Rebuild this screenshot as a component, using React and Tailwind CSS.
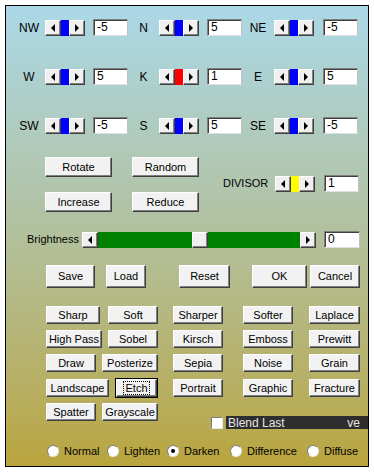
import React from 'react'

const font = { fontFamily: '"Liberation Sans", Arial, sans-serif' }

function Arrow({ dir }) {
    return dir === 'left'
        ? <span className='w-0 h-0 border-y-[4px] border-y-transparent border-r-[4px] border-r-black' />
        : <span className='w-0 h-0 border-y-[4px] border-y-transparent border-l-[4px] border-l-black' />
}

function ArrowBtn({ dir }) {
    return (
        <div className='w-[16px] h-[16px] flex items-center justify-center bg-[#f0f0f0] border-t border-l border-t-white border-l-white border-r border-b border-r-[#404040] border-b-[#404040] shadow-[inset_-1px_-1px_0_#808080]'>
            <Arrow dir={dir} />
        </div>
    )
}

function Spin({ thumb = 'bg-[#0000ff]' }) {
    return (
        <div className='flex w-[40px] h-[16px]'>
            <ArrowBtn dir='left' />
            <div className={`w-[8px] h-[16px] ${thumb}`} />
            <ArrowBtn dir='right' />
        </div>
    )
}

function Field({ value, className = 'w-[35px]' }) {
    return (
        <div className={`${className} h-[17px] bg-white border-t border-l border-t-[#808080] border-l-[#808080] border-r border-b border-r-[#c0c0c0] border-b-[#e0e0e0] shadow-[inset_1px_1px_0_#404040] pl-[3px] text-[12px] leading-[15px] text-black`}>
            {value}
        </div>
    )
}

function Btn({ children, className = '', focused }) {
    return (
        <div className={`${className} flex items-center justify-center bg-[#f2f2f2] text-[11px] text-black border-t border-l border-t-white border-l-white border-r border-b border-r-[#404040] border-b-[#404040] shadow-[inset_-1px_-1px_0_#808080] ${focused ? 'outline outline-1 outline-black' : ''}`}>
            {focused ? <span className='border border-dotted border-black px-[1px] leading-[12px]'>{children}</span> : children}
        </div>
    )
}

function DirRow({ cells, className }) {
    return (
        <div className={`flex items-center h-[17px] ${className}`}>
            <span className='ml-[7px] w-[32px] text-center text-[12px]'>{cells[0][0]}</span>
            <Spin thumb={cells[0][2]} />
            <div className='ml-[8px]'><Field value={cells[0][1]} /></div>
            <span className='w-[31px] text-center text-[12px]'>{cells[1][0]}</span>
            <Spin thumb={cells[1][2]} />
            <div className='ml-[8px]'><Field value={cells[1][1]} /></div>
            <span className='w-[32px] text-center text-[12px]'>{cells[2][0]}</span>
            <Spin thumb={cells[2][2]} />
            <div className='ml-[9px]'><Field value={cells[2][1]} /></div>
        </div>
    )
}

function Radio({ label, checked, className }) {
    return (
        <div className={`flex items-center gap-[5px] ${className}`}>
            <span className='w-[12px] h-[12px] rounded-full bg-white border border-t-[#808080] border-l-[#808080] border-r-[#e8e8e8] border-b-[#e8e8e8] flex items-center justify-center'>
                {checked && <span className='w-[4px] h-[4px] rounded-full bg-black' />}
            </span>
            <span className='text-[11px] text-black'>{label}</span>
        </div>
    )
}

export default function App() {
    const blue = 'bg-[#0000ff]'
    return (
        <div className='w-[374px] h-[472px] bg-white pt-[5px] pl-[5px]' style={font}>
            <div className='w-[364px] h-[462px] border border-black bg-gradient-to-b from-[#abd8e7] via-[#b2c09c] to-[#b9a53c] flex flex-col text-black'>
                <DirRow className='mt-[13px]' cells={[['NW', '-5', blue], ['N', '5', blue], ['NE', '-5', blue]]} />
                <DirRow className='mt-[32px]' cells={[['W', '5', blue], ['K', '1', 'bg-[#ff0000]'], ['E', '5', blue]]} />
                <DirRow className='mt-[32px]' cells={[['SW', '-5', blue], ['S', '5', blue], ['SE', '-5', blue]]} />

                {/* rotate / divisor block */}
                <div className='flex items-center mt-[23px]'>
                    <div className='ml-[39px] flex flex-col gap-[15px]'>
                        <div className='flex gap-[20px]'>
                            <Btn className='w-[67px] h-[20px]'>Rotate</Btn>
                            <Btn className='w-[67px] h-[20px]'>Random</Btn>
                        </div>
                        <div className='flex gap-[20px]'>
                            <Btn className='w-[67px] h-[20px]'>Increase</Btn>
                            <Btn className='w-[67px] h-[20px]'>Reduce</Btn>
                        </div>
                    </div>
                    <div className='flex items-center ml-[24px] -mt-[2px]'>
                        <span className='w-[52px] text-[11px]'>DIVISOR</span>
                        <Spin thumb='bg-[#ffff00]' />
                        <div className='ml-[9px]'><Field value='1' /></div>
                    </div>
                </div>

                {/* brightness */}
                <div className='flex items-center mt-[19px] h-[17px]'>
                    <span className='ml-[21px] w-[55px] text-[11px]'>Brightness</span>
                    <div className='flex w-[234px] h-[16px]'>
                        <ArrowBtn dir='left' />
                        <div className='flex-1 bg-[#008000] flex'>
                            <div className='ml-[94px] w-[16px] h-[16px] bg-[#f0f0f0] border-t border-l border-t-white border-l-white border-r border-b border-r-[#404040] border-b-[#404040] shadow-[inset_-1px_-1px_0_#808080]' />
                        </div>
                        <ArrowBtn dir='right' />
                    </div>
                    <div className='ml-[8px]'><Field value='0' className='w-[36px]' /></div>
                </div>

                {/* actions */}
                <div className='flex mt-[17px] h-[23px]'>
                    <Btn className='ml-[40px] w-[49px] h-[23px]'>Save</Btn>
                    <Btn className='ml-[11px] w-[40px] h-[23px]'>Load</Btn>
                    <Btn className='ml-[33px] w-[51px] h-[23px]'>Reset</Btn>
                    <Btn className='ml-[22px] w-[55px] h-[23px]'>OK</Btn>
                    <Btn className='ml-[3px] w-[50px] h-[23px]'>Cancel</Btn>
                </div>

                {/* filters */}
                <div className='flex mt-[18px] h-[18px]'>
                    <Btn className='ml-[40px] w-[54px] h-[18px]'>Sharp</Btn>
                    <Btn className='ml-[8px] w-[50px] h-[18px]'>Soft</Btn>
                    <Btn className='ml-[15px] w-[50px] h-[18px]'>Sharper</Btn>
                    <Btn className='ml-[20px] w-[50px] h-[18px]'>Softer</Btn>
                    <Btn className='ml-[16px] w-[51px] h-[18px]'>Laplace</Btn>
                </div>
                <div className='flex mt-[6px] h-[18px]'>
                    <Btn className='ml-[40px] w-[56px] h-[18px]'>High Pass</Btn>
                    <Btn className='ml-[6px] w-[50px] h-[18px]'>Sobel</Btn>
                    <Btn className='ml-[15px] w-[50px] h-[18px]'>Kirsch</Btn>
                    <Btn className='ml-[20px] w-[50px] h-[18px]'>Emboss</Btn>
                    <Btn className='ml-[16px] w-[51px] h-[18px]'>Prewitt</Btn>
                </div>
                <div className='flex mt-[6px] h-[18px]'>
                    <Btn className='ml-[40px] w-[50px] h-[18px]'>Draw</Btn>
                    <Btn className='ml-[6px] w-[56px] h-[18px]'>Posterize</Btn>
                    <Btn className='ml-[15px] w-[50px] h-[18px]'>Sepia</Btn>
                    <Btn className='ml-[20px] w-[50px] h-[18px]'>Noise</Btn>
                    <Btn className='ml-[16px] w-[51px] h-[18px]'>Grain</Btn>
                </div>
                <div className='flex mt-[7px] h-[18px]'>
                    <Btn className='ml-[40px] w-[63px] h-[18px]'>Landscape</Btn>
                    <Btn focused className='ml-[7px] w-[41px] h-[18px]'>Etch</Btn>
                    <Btn className='ml-[16px] w-[50px] h-[18px]'>Portrait</Btn>
                    <Btn className='ml-[20px] w-[50px] h-[18px]'>Graphic</Btn>
                    <Btn className='ml-[16px] w-[51px] h-[18px]'>Fracture</Btn>
                </div>
                <div className='flex mt-[6px] items-start'>
                    <Btn className='ml-[40px] w-[50px] h-[18px]'>Spatter</Btn>
                    <Btn className='ml-[6px] w-[56px] h-[18px]'>Grayscale</Btn>
                    <div className='ml-[53px] mt-[13px] flex items-center flex-1'>
                        <span className='w-[12px] h-[12px] bg-white border-t border-l border-t-[#808080] border-l-[#808080] border-r border-b border-r-[#e8e8e8] border-b-[#e8e8e8]' />
                        <div className='ml-[3px] flex-1 h-[13px] bg-[#2e2e2e] flex items-center justify-between pl-[2px] pr-[8px] text-[12px] text-[#e6e6e6]'>
                            <span>Blend Last</span>
                            <span>ve</span>
                        </div>
                    </div>
                </div>

                {/* blend modes */}
                <div className='flex mt-[15px] h-[14px] items-center'>
                    <Radio label='Normal' className='ml-[41px] w-[60px]' />
                    <Radio label='Lighten' className='w-[60px]' />
                    <Radio label='Darken' checked className='w-[63px]' />
                    <Radio label='Difference' className='w-[77px]' />
                    <Radio label='Diffuse' />
                </div>
            </div>
        </div>
    )
}
